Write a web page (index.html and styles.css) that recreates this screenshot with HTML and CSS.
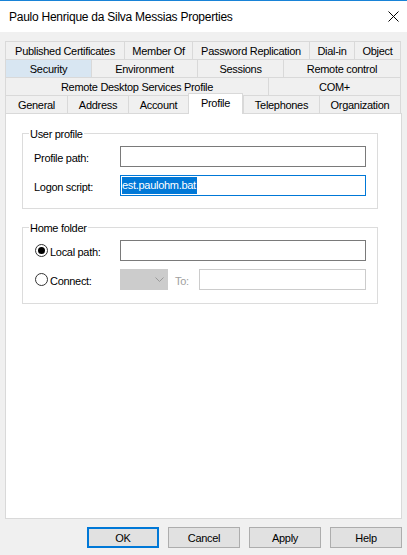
FILE: index.html
```html
<!DOCTYPE html>
<html>
<head>
<meta charset="utf-8">
<link rel="stylesheet" href="styles.css">
</head>
<body>
<div class="titlebar">
  <span class="title">Paulo Henrique da Silva Messias Properties</span>
  <span class="close"><svg width="11" height="11" viewBox="0 0 11 11"><path d="M0.5 0.5 L10.5 10.5 M10.5 0.5 L0.5 10.5" stroke="#000" stroke-width="1" fill="none"/></svg></span>
</div>
<div class="tabs">
  <div class="tabrow r1">
    <div class="tab">Published Certificates</div>
    <div class="tab">Member Of</div>
    <div class="tab">Password Replication</div>
    <div class="tab">Dial-in</div>
    <div class="tab">Object</div>
  </div>
  <div class="tabrow r2">
    <div class="tab hot">Security</div>
    <div class="tab">Environment</div>
    <div class="tab">Sessions</div>
    <div class="tab">Remote control</div>
  </div>
  <div class="tabrow r3">
    <div class="tab">Remote Desktop Services Profile</div>
    <div class="tab">COM+</div>
  </div>
  <div class="tabrow r4">
    <div class="tab">General</div>
    <div class="tab">Address</div>
    <div class="tab">Account</div>
    <div class="tab active">Profile</div>
    <div class="tab">Telephones</div>
    <div class="tab">Organization</div>
  </div>
</div>
<div class="panel">
  <div class="group g1">
    <div class="group-title">User profile</div>
    <div class="row"><span class="lbl">Profile path:</span><div class="input"></div></div>
    <div class="row"><span class="lbl">Logon script:</span><div class="input focus"><span class="sel">est.paulohm.bat</span></div></div>
  </div>
  <div class="group g2">
    <div class="group-title">Home folder</div>
    <div class="row"><span class="radio on"></span><span class="rlbl">Local path:</span><div class="input"></div></div>
    <div class="row"><span class="radio"></span><span class="rlbl">Connect:</span>
      <div class="combo"><svg width="9" height="5" viewBox="0 0 9 5"><path d="M0.5 0.5 L4.5 4.5 L8.5 0.5" stroke="#9a9a9a" stroke-width="1" fill="none"/></svg></div>
      <span class="tolbl">To:</span>
      <div class="input disabled"></div>
    </div>
  </div>
</div>
<div class="buttons">
  <div class="btn default">OK</div>
  <div class="btn">Cancel</div>
  <div class="btn">Apply</div>
  <div class="btn">Help</div>
</div>
</body>
</html>
```

FILE: styles.css
```css
html, body {
  margin: 0;
  padding: 0;
}
body {
  width: 407px;
  height: 555px;
  overflow: hidden;
  background: #f0f0f0;
  font-family: "Liberation Sans", Arial, sans-serif;
  font-size: 11px;
  letter-spacing: -0.3px;
  color: #000;
}
.titlebar {
  box-sizing: border-box;
  height: 32px;
  border-top: 1px solid #1883d7;
  background: #fff;
  display: flex;
  align-items: center;
  justify-content: space-between;
  padding-left: 9px;
}
.title {
  font-size: 12px;
  letter-spacing: -0.25px;
}
.close {
  width: 28px;
  height: 31px;
  display: flex;
  align-items: center;
  justify-content: center;
}
.close svg {
  display: block;
}
.tabs {
  margin: 9px 0 0 5px;
  width: 396px;
}
.tabrow {
  display: grid;
  height: 18px;
}
.r1 { grid-template-columns: 119px 68px 117px 45px 1fr; }
.r2 { grid-template-columns: 86px 106px 86px 1fr; }
.r3 { grid-template-columns: 263px 1fr; }
.r4 { grid-template-columns: 62px 61px 60px 55px 76px 1fr; }
.tab {
  box-sizing: border-box;
  border-left: 1px solid #d9d9d9;
  border-top: 1px solid #d9d9d9;
  text-align: center;
  line-height: 18px;
  white-space: nowrap;
  overflow: hidden;
}
.tab:last-child {
  border-right: 1px solid #d9d9d9;
}
.tab.hot {
  background: #d8e6f2;
}
.tab.active {
  position: relative;
  z-index: 1;
  background: #fff;
  margin-top: -2px;
  margin-bottom: -1px;
  border-right: 1px solid #d9d9d9;
}
.panel {
  box-sizing: border-box;
  margin-left: 5px;
  width: 397px;
  height: 406px;
  border: 1px solid #d9d9d9;
  background: #fff;
  padding: 19px 0 0 16px;
}
.group {
  position: relative;
  box-sizing: border-box;
  width: 356px;
  border: 1px solid #dcdcdc;
  padding: 12px 11px;
  display: flex;
  flex-direction: column;
  gap: 8px;
}
.g2 {
  margin-top: 18px;
  padding-bottom: 13px;
}
.group-title {
  position: absolute;
  top: -7px;
  left: 6px;
  padding: 0 1px;
  line-height: 14px;
  background: #fff;
}
.row {
  display: flex;
  align-items: center;
  height: 21px;
}
.lbl,
.rlbl,
.tolbl {
  padding-top: 2px;
}
.lbl {
  width: 86px;
}
.input {
  box-sizing: border-box;
  width: 246px;
  height: 21px;
  border: 1px solid #7a7a7a;
  background: #fff;
}
.input.focus {
  border-color: #0078d7;
  padding: 1px;
}
.input.disabled {
  width: 167px;
  border-color: #cccccc;
}
.sel {
  display: inline-block;
  height: 17px;
  line-height: 17px;
  background: #0078d7;
  color: #fff;
  padding-right: 1px;
}
.radio {
  box-sizing: border-box;
  width: 13px;
  height: 13px;
  margin-left: 1px;
  margin-right: 2px;
  border: 1px solid #333;
  border-radius: 50%;
  display: flex;
  align-items: center;
  justify-content: center;
}
.radio.on::after {
  content: "";
  width: 7px;
  height: 7px;
  border-radius: 50%;
  background: #000;
}
.rlbl {
  width: 70px;
}
.combo {
  box-sizing: border-box;
  width: 48px;
  height: 21px;
  background: #cccccc;
  border: 1px solid #cccccc;
  display: flex;
  align-items: center;
  justify-content: flex-end;
  padding-right: 3px;
}
.combo svg {
  display: block;
}
.tolbl {
  width: 24px;
  margin-left: 7px;
  color: #a0a0a0;
}
.buttons {
  display: flex;
  justify-content: flex-end;
  gap: 9px;
  margin-top: 8px;
  padding-right: 5px;
}
.btn {
  box-sizing: border-box;
  width: 72px;
  height: 21px;
  border: 1px solid #adadad;
  background: #e1e1e1;
  display: flex;
  align-items: center;
  justify-content: center;
}
.btn.default {
  border: 2px solid #0078d7;
}
```
